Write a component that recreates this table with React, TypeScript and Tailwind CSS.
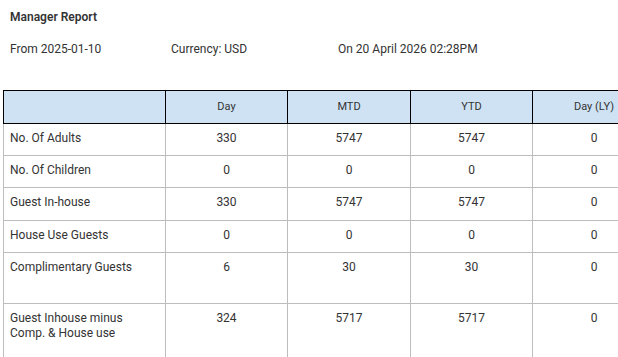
import React from 'react';

const rows = [
  { label: 'No. Of Adults', day: '330', mtd: '5747', ytd: '5747', ly: '0', h: 'h-[32px]' },
  { label: 'No. Of Children', day: '0', mtd: '0', ytd: '0', ly: '0', h: 'h-[32px]' },
  { label: 'Guest In-house', day: '330', mtd: '5747', ytd: '5747', ly: '0', h: 'h-[33px]' },
  { label: 'House Use Guests', day: '0', mtd: '0', ytd: '0', ly: '0', h: 'h-[32px]' },
  { label: 'Complimentary Guests', day: '6', mtd: '30', ytd: '30', ly: '0', h: 'h-[51px]' },
  { label: 'Guest Inhouse minus Comp. & House use', day: '324', mtd: '5717', ytd: '5717', ly: '0', h: 'h-[60px]' },
];

const headers = ['Day', 'MTD', 'YTD', 'Day (LY)'];

export default function App() {
  return (
    <div className="w-[618px] h-[357px] overflow-hidden bg-white text-[12px] text-[#333] font-['Roboto',sans-serif]">
      <div className="px-[10px] pt-[10px]">
        <div className="font-semibold leading-[14px]">Manager Report</div>
        <div className="mt-[18px] flex leading-[14px]">
          <span className="w-[161px]">From 2025-01-10</span>
          <span className="w-[167px]">Currency: USD</span>
          <span>On 20 April 2026 02:28PM</span>
        </div>
      </div>

      <table className="mt-[34px] ml-[3px] w-[652px] table-fixed border-collapse">
        <colgroup>
          <col className="w-[162px]" />
          <col className="w-[122px]" />
          <col className="w-[123px]" />
          <col className="w-[122px]" />
          <col className="w-[123px]" />
        </colgroup>
        <thead>
          <tr className="h-[33px]">
            <th className="border border-black bg-[#cfe2f3]" />
            {headers.map((h) => (
              <th key={h} className="border border-black bg-[#cfe2f3] text-[11px] font-normal text-center">
                {h}
              </th>
            ))}
          </tr>
        </thead>
        <tbody>
          {rows.map((r) => (
            <tr key={r.label} className={r.h}>
              <td className="border border-[#bdbdbd] align-top pl-[6px] pr-[20px] pt-[7px] leading-[15px]">
                {r.label}
              </td>
              <td className="border border-[#bdbdbd] align-top text-center pt-[7px] leading-[15px]">{r.day}</td>
              <td className="border border-[#bdbdbd] align-top text-center pt-[7px] leading-[15px]">{r.mtd}</td>
              <td className="border border-[#bdbdbd] align-top text-center pt-[7px] leading-[15px]">{r.ytd}</td>
              <td className="border border-[#bdbdbd] align-top text-center pt-[7px] leading-[15px]">{r.ly}</td>
            </tr>
          ))}
        </tbody>
      </table>
    </div>
  );
}
